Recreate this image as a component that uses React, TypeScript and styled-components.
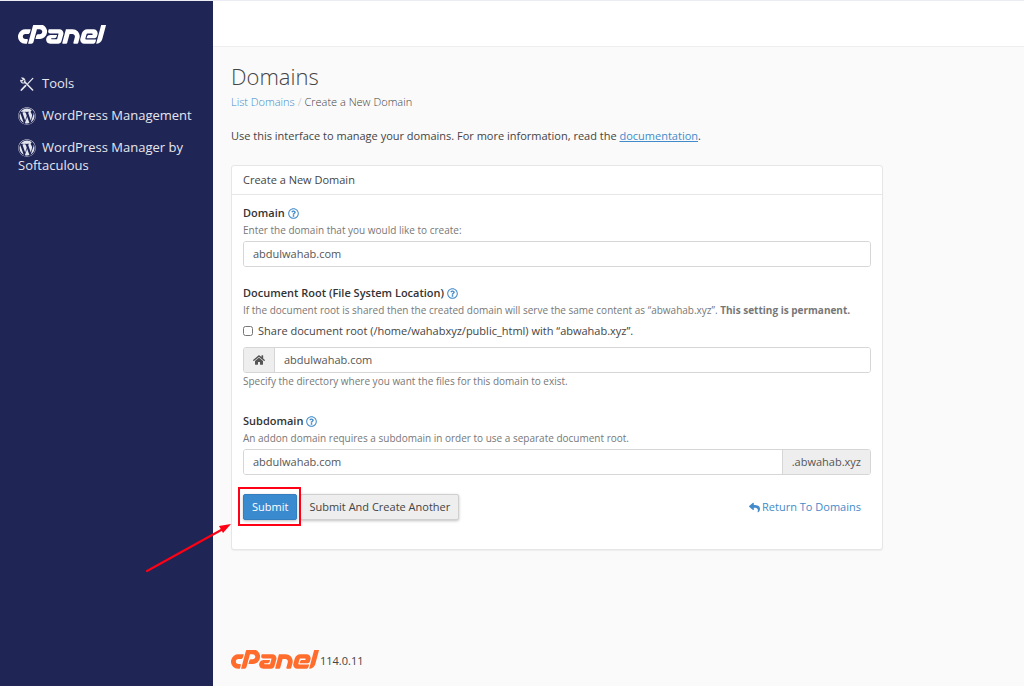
import React from "react";
import styled, { createGlobalStyle } from "styled-components";
import { FaCpanel, FaHome, FaRegQuestionCircle, FaReply, FaWordpress } from "react-icons/fa";

const GlobalStyle = createGlobalStyle`
  *, *::before, *::after { box-sizing: border-box; }
  body {
    margin: 0;
    background: #fafafa;
    color: #444;
    font: 11px/18px "Open Sans", "Noto Sans", sans-serif;
  }
  a { color: #428bca; text-decoration: none; }
  button, input { font: inherit; }
`;

const Page = styled.div`
  display: flex;
  min-height: 100vh;
  border-top: 1px solid #ebecf4;
`;

const Sidebar = styled.aside`
  flex: none;
  width: 213px;
  padding: 24px 18px;
  background: #1f2555;
  color: #fff;
`;

const Logo = styled(FaCpanel).attrs({ viewBox: "0 184 640 144", "aria-label": "cPanel" })`
  display: block;
  width: 88px;
  height: 20px;
`;

const Nav = styled.nav`
  display: flex;
  flex-direction: column;
  gap: 14px;
  margin-top: 29px;
`;

const NavLink = styled.a`
  color: #e6e7ee;
  font-size: 13px;
  line-height: 18px;
  svg {
    width: 18px;
    height: 18px;
    margin: -4px 6px -4px 0;
    vertical-align: -1px;
  }
`;

const Main = styled.div`
  flex: 1;
  min-width: 0;
`;

const TopBar = styled.header`
  height: 46px;
  background: #fff;
  border-bottom: 1px solid #eee;
`;

const Content = styled.main`
  padding: 13px 18px;
`;

const Title = styled.h1`
  margin: 0;
  font-size: 22px;
  line-height: 32px;
  font-weight: 300;
`;

const Breadcrumb = styled.nav`
  display: flex;
  gap: 3px;
  margin-top: 1px;
  font-weight: 300;
  i { color: #bbb; font-style: normal; }
`;

const Intro = styled.p`
  margin: 16px 0 20px;
  a { text-decoration: underline; }
`;

const Panel = styled.section`
  max-width: 652px;
  background: #fff;
  border: 1px solid #e6e6e6;
  border-radius: 3px;
  box-shadow: 0 1px 1px rgba(0, 0, 0, 0.05);
`;

const PanelTitle = styled.h2`
  margin: 0;
  padding: 5px 11px;
  border-bottom: 1px solid #e6e6e6;
  font-size: 11px;
  line-height: 18px;
  font-weight: 400;
`;

const Form = styled.form`
  display: flex;
  flex-direction: column;
  gap: 17px;
  padding: 9px 11px 29px;
`;

const Field = styled.div<{ $spaced?: boolean }>`
  padding-bottom: ${(p) => (p.$spaced ? 6 : 0)}px;
`;

const FieldHead = styled.div`
  display: flex;
  align-items: center;
  gap: 3px;
  label { font-weight: 600; color: #333; }
`;

const HelpButton = styled.button.attrs({ type: "button" })`
  display: flex;
  padding: 0;
  border: 0;
  background: none;
  color: #428bca;
  svg { width: 11px; height: 11px; }
`;

const Hint = styled.p`
  margin: 0;
  color: #777;
  font-size: 10px;
  line-height: 16px;
  strong { font-weight: 700; }
`;

const CheckRow = styled.label`
  display: flex;
  align-items: center;
  gap: 5px;
  margin: 4px 0 7px;
  input { width: 10px; height: 10px; margin: 0; }
`;

const InputGroup = styled.div`
  display: flex;
  height: 26px;
  margin-top: 3px;
  border: 1px solid #d6d6d6;
  border-radius: 3px;
  overflow: hidden;
`;

const TextInput = styled.input`
  flex: 1;
  min-width: 0;
  padding: 0 9px;
  border: 0;
  background: #fff;
  color: #555;
`;

const Addon = styled.span<{ $end?: boolean }>`
  display: flex;
  align-items: center;
  padding: 0 9px;
  background: #eee;
  color: #555;
  border: 0 solid #d6d6d6;
  border-width: ${(p) => (p.$end ? "0 0 0 1px" : "0 1px 0 0")};
  svg { width: 12px; height: 12px; }
`;

const Actions = styled.div`
  display: flex;
  align-items: center;
  gap: 3px;
  margin-top: 2px;
  > a {
    display: flex;
    align-items: center;
    gap: 2px;
    margin-left: auto;
    padding-right: 10px;
  }
`;

const Button = styled.button<{ $primary?: boolean }>`
  height: 26px;
  padding: 0 8px;
  border: 1px solid ${(p) => (p.$primary ? "#357ebd" : "#d0d0d0")};
  border-radius: 2px;
  background: ${(p) => (p.$primary ? "#3a8acf" : "#eee")};
  color: ${(p) => (p.$primary ? "#fff" : "#444")};
  box-shadow: 0 1px 3px rgba(0, 0, 0, 0.25);
`;

const Highlight = styled.div`
  position: relative;
  display: flex;
  &::after {
    content: "";
    position: absolute;
    inset: -7px -4px -6px -5px;
    border: 2px solid #ff0014;
    pointer-events: none;
  }
`;

const Arrow = styled.svg`
  position: absolute;
  top: 28px;
  left: -98px;
  width: 88px;
  height: 52px;
  pointer-events: none;
`;

const Footer = styled.footer`
  display: flex;
  align-items: flex-end;
  gap: 1px;
  margin-top: 100px;
  svg { color: #ff6c2c; }
`;

const ToolsIcon = () => (
  <svg viewBox="0 0 18 18" fill="none" stroke="currentColor" strokeLinecap="round" aria-hidden="true">
    <path d="M6.6 6.8 14.6 15" strokeWidth="1.6" />
    <path d="M6.8 6.6C7.4 4.8 6 2.7 4 3l1.4 1.5-1 1.3-1.7-.4C2.7 7.5 5 8.5 6.8 7.8" strokeWidth="1.1" />
    <path d="M14.8 3.4 9.8 8.6" strokeWidth="1.3" />
    <path d="M7.6 10.6 3.4 15" strokeWidth="1.8" />
  </svg>
);

const Help = ({ topic }: { topic: string }) => (
  <HelpButton aria-label={`Help: ${topic}`}>
    <FaRegQuestionCircle />
  </HelpButton>
);

export default function App() {
  return (
    <>
      <GlobalStyle />
      <Page>
        <Sidebar>
          <Logo />
          <Nav>
            <NavLink href="#tools"><ToolsIcon />Tools</NavLink>
            <NavLink href="#wordpress"><FaWordpress />WordPress Management</NavLink>
            <NavLink href="#softaculous"><FaWordpress />WordPress Manager by Softaculous</NavLink>
          </Nav>
        </Sidebar>
        <Main>
          <TopBar />
          <Content>
            <Title>Domains</Title>
            <Breadcrumb>
              <a href="#domains">List Domains</a>
              <i>/</i>
              <span>Create a New Domain</span>
            </Breadcrumb>
            <Intro>
              Use this interface to manage your domains. For more information, read the{" "}
              <a href="#documentation">documentation</a>.
            </Intro>
            <Panel>
              <PanelTitle>Create a New Domain</PanelTitle>
              <Form onSubmit={(e) => e.preventDefault()}>
                <Field>
                  <FieldHead>
                    <label htmlFor="domain">Domain</label>
                    <Help topic="Domain" />
                  </FieldHead>
                  <Hint>Enter the domain that you would like to create:</Hint>
                  <InputGroup>
                    <TextInput id="domain" defaultValue="abdulwahab.com" />
                  </InputGroup>
                </Field>
                <Field $spaced>
                  <FieldHead>
                    <label htmlFor="root">Document Root (File System Location)</label>
                    <Help topic="Document Root" />
                  </FieldHead>
                  <Hint>
                    If the document root is shared then the created domain will serve the same content as
                    “abwahab.xyz”. <strong>This setting is permanent.</strong>
                  </Hint>
                  <CheckRow>
                    <input type="checkbox" />
                    Share document root (/home/wahabxyz/public_html) with “abwahab.xyz”.
                  </CheckRow>
                  <InputGroup>
                    <Addon><FaHome /></Addon>
                    <TextInput id="root" defaultValue="abdulwahab.com" />
                  </InputGroup>
                  <Hint>Specify the directory where you want the files for this domain to exist.</Hint>
                </Field>
                <Field>
                  <FieldHead>
                    <label htmlFor="subdomain">Subdomain</label>
                    <Help topic="Subdomain" />
                  </FieldHead>
                  <Hint>An addon domain requires a subdomain in order to use a separate document root.</Hint>
                  <InputGroup>
                    <TextInput id="subdomain" defaultValue="abdulwahab.com" />
                    <Addon $end>.abwahab.xyz</Addon>
                  </InputGroup>
                </Field>
                <Actions>
                  <Highlight>
                    <Button $primary type="submit">Submit</Button>
                    <Arrow viewBox="0 0 88 52" aria-hidden="true">
                      <path d="M2 49 78 7" stroke="#ff0014" strokeWidth="2" strokeLinecap="round" />
                      <path d="M86 2 74 4l4 7z" fill="#ff0014" />
                    </Arrow>
                  </Highlight>
                  <Button type="button">Submit And Create Another</Button>
                  <a href="#domains"><FaReply />Return To Domains</a>
                </Actions>
              </Form>
            </Panel>
            <Footer>
              <Logo />
              114.0.11
            </Footer>
          </Content>
        </Main>
      </Page>
    </>
  );
}
